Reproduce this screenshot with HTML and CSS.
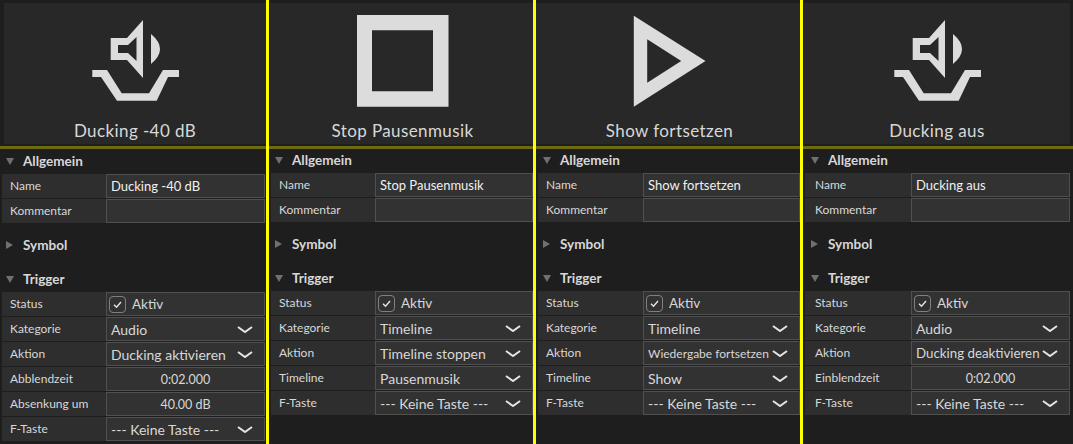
FILE: index.html
```html
<!DOCTYPE html>
<html lang="de">
<head>
    <meta charset="UTF-8">
    <meta name="viewport" content="width=device-width, initial-scale=1.0">
    <title>Cues</title>
    <link rel="stylesheet" href="styles.css">
</head>
<body>
    <div class="panels">
        <div class="panel panel-first">
            <div class="tile">
                <svg class="icon" viewBox="85 15 100 100"><path d="M110.7 38H127L143 20V78L127 60H110.7ZM118 45V53H128L136.5 61V37L128 45Z" fill-rule="evenodd"/><path d="M151 34Q169 49 151 64Z"/><path d="M92.3 70H107L121.7 93.3H149L163 70H179V77H168L156.7 100.7H117L101 77H92.3Z"/></svg>
                <div class="tile-name">Ducking -40 dB</div>
            </div>
            <div class="rule"></div>
            <h2 class="section"><span class="arrow-open"></span>Allgemein</h2>
            <div class="row"><div class="label">Name</div><div class="value name">Ducking -40 dB</div></div>
            <div class="row"><div class="label">Kommentar</div><div class="value"></div></div>
            <h2 class="section section-gap"><span class="arrow-closed"></span>Symbol</h2>
            <h2 class="section section-gap"><span class="arrow-open"></span>Trigger</h2>
            <div class="row"><div class="label">Status</div><div class="value toggle"><span class="check"><svg viewBox="0 0 15 15"><path d="M4 7.8L6.5 10.2L11 5"/></svg></span>Aktiv</div></div>
            <div class="row"><div class="label">Kategorie</div><div class="value select">Audio<svg class="chevron" viewBox="0 0 16 7"><path d="M1 1L8 6L15 1"/></svg></div></div>
            <div class="row"><div class="label">Aktion</div><div class="value select">Ducking aktivieren<svg class="chevron" viewBox="0 0 16 7"><path d="M1 1L8 6L15 1"/></svg></div></div>
            <div class="row"><div class="label">Abblendzeit</div><div class="value center">0:02.000</div></div>
            <div class="row"><div class="label">Absenkung um</div><div class="value center">40.00 dB</div></div>
            <div class="row"><div class="label">F-Taste</div><div class="value select">--- Keine Taste ---<svg class="chevron" viewBox="0 0 16 7"><path d="M1 1L8 6L15 1"/></svg></div></div>
        </div>

        <div class="panel panel-stop">
            <div class="tile">
                <svg class="icon" viewBox="0 0 100 100"><path d="M4 0H95.5V91.7H4ZM19 15.3V76.3H80V15.3Z" fill-rule="evenodd"/></svg>
                <div class="tile-name">Stop Pausenmusik</div>
            </div>
            <div class="rule"></div>
            <h2 class="section"><span class="arrow-open"></span>Allgemein</h2>
            <div class="row"><div class="label">Name</div><div class="value name">Stop Pausenmusik</div></div>
            <div class="row"><div class="label">Kommentar</div><div class="value"></div></div>
            <h2 class="section section-gap"><span class="arrow-closed"></span>Symbol</h2>
            <h2 class="section section-gap"><span class="arrow-open"></span>Trigger</h2>
            <div class="row"><div class="label">Status</div><div class="value toggle"><span class="check"><svg viewBox="0 0 15 15"><path d="M4 7.8L6.5 10.2L11 5"/></svg></span>Aktiv</div></div>
            <div class="row"><div class="label">Kategorie</div><div class="value select">Timeline<svg class="chevron" viewBox="0 0 16 7"><path d="M1 1L8 6L15 1"/></svg></div></div>
            <div class="row"><div class="label">Aktion</div><div class="value select">Timeline stoppen<svg class="chevron" viewBox="0 0 16 7"><path d="M1 1L8 6L15 1"/></svg></div></div>
            <div class="row"><div class="label">Timeline</div><div class="value select">Pausenmusik<svg class="chevron" viewBox="0 0 16 7"><path d="M1 1L8 6L15 1"/></svg></div></div>
            <div class="row"><div class="label">F-Taste</div><div class="value select">--- Keine Taste ---<svg class="chevron" viewBox="0 0 16 7"><path d="M1 1L8 6L15 1"/></svg></div></div>
        </div>

        <div class="panel panel-show">
            <div class="tile">
                <svg class="icon" viewBox="0 0 100 100"><path d="M13.8 0.7L85.5 46L13.8 91.7ZM27.2 24.3V67.7L61.2 46Z" fill-rule="evenodd"/></svg>
                <div class="tile-name">Show fortsetzen</div>
            </div>
            <div class="rule"></div>
            <h2 class="section"><span class="arrow-open"></span>Allgemein</h2>
            <div class="row"><div class="label">Name</div><div class="value name">Show fortsetzen</div></div>
            <div class="row"><div class="label">Kommentar</div><div class="value"></div></div>
            <h2 class="section section-gap"><span class="arrow-closed"></span>Symbol</h2>
            <h2 class="section section-gap"><span class="arrow-open"></span>Trigger</h2>
            <div class="row"><div class="label">Status</div><div class="value toggle"><span class="check"><svg viewBox="0 0 15 15"><path d="M4 7.8L6.5 10.2L11 5"/></svg></span>Aktiv</div></div>
            <div class="row"><div class="label">Kategorie</div><div class="value select">Timeline<svg class="chevron" viewBox="0 0 16 7"><path d="M1 1L8 6L15 1"/></svg></div></div>
            <div class="row"><div class="label">Aktion</div><div class="value select narrow">Wiedergabe fortsetzen<svg class="chevron" viewBox="0 0 16 7"><path d="M1 1L8 6L15 1"/></svg></div></div>
            <div class="row"><div class="label">Timeline</div><div class="value select">Show<svg class="chevron" viewBox="0 0 16 7"><path d="M1 1L8 6L15 1"/></svg></div></div>
            <div class="row"><div class="label">F-Taste</div><div class="value select">--- Keine Taste ---<svg class="chevron" viewBox="0 0 16 7"><path d="M1 1L8 6L15 1"/></svg></div></div>
        </div>

        <div class="panel panel-last">
            <div class="tile">
                <svg class="icon" viewBox="85 15 100 100"><path d="M110.7 38H127L143 20V78L127 60H110.7ZM118 45V53H128L136.5 61V37L128 45Z" fill-rule="evenodd"/><path d="M151 34Q169 49 151 64Z"/><path d="M92.3 70H107L121.7 93.3H149L163 70H179V77H168L156.7 100.7H117L101 77H92.3Z"/></svg>
                <div class="tile-name">Ducking aus</div>
            </div>
            <div class="rule"></div>
            <h2 class="section"><span class="arrow-open"></span>Allgemein</h2>
            <div class="row"><div class="label">Name</div><div class="value name">Ducking aus</div></div>
            <div class="row"><div class="label">Kommentar</div><div class="value"></div></div>
            <h2 class="section section-gap"><span class="arrow-closed"></span>Symbol</h2>
            <h2 class="section section-gap"><span class="arrow-open"></span>Trigger</h2>
            <div class="row"><div class="label">Status</div><div class="value toggle"><span class="check"><svg viewBox="0 0 15 15"><path d="M4 7.8L6.5 10.2L11 5"/></svg></span>Aktiv</div></div>
            <div class="row"><div class="label">Kategorie</div><div class="value select">Audio<svg class="chevron" viewBox="0 0 16 7"><path d="M1 1L8 6L15 1"/></svg></div></div>
            <div class="row"><div class="label">Aktion</div><div class="value select tight">Ducking deaktivieren<svg class="chevron" viewBox="0 0 16 7"><path d="M1 1L8 6L15 1"/></svg></div></div>
            <div class="row"><div class="label">Einblendzeit</div><div class="value center">0:02.000</div></div>
            <div class="row"><div class="label">F-Taste</div><div class="value select">--- Keine Taste ---<svg class="chevron" viewBox="0 0 16 7"><path d="M1 1L8 6L15 1"/></svg></div></div>
        </div>
    </div>
</body>
</html>
```
FILE: styles.css
```css
body {
    font-family: Lato, "Noto Sans", sans-serif;
    background-color: #1e1e1e;
    color: #d8d8d8;
    margin: 0;
    overflow: hidden;
}
.panels {
    display: flex;
    height: 444px;
}
.panel {
    width: 267px;
    box-sizing: border-box;
    padding-top: 3px;
    border-right: 3px solid #ffff00;
}
.panel-first {
    width: 269px;
}
.panel-last {
    border-right: none;
    flex: 1;
}
.tile {
    height: 141px;
    margin-left: 1px;
    background-color: #282828;
    display: flex;
    flex-direction: column;
    align-items: center;
}
.panel-first .tile {
    margin-left: 4px;
}
.panel-stop .tile {
    padding-left: 2px;
}
.panel-show .tile {
    margin-left: 0;
    padding-left: 3px;
}
.panel-last .tile {
    margin-right: 3px;
}
.icon {
    width: 100px;
    height: 100px;
    margin-top: 12px;
    fill: #dcdcdc;
}
.tile-name {
    font-size: 17px;
    line-height: 22px;
    margin-top: 5px;
    letter-spacing: 0.4px;
}
.rule {
    height: 3px;
    margin-top: 2px;
    margin-bottom: -1px;
    background-color: #6e6a12;
}
.panel-first .rule {
    margin-bottom: 0;
}
.section {
    display: flex;
    align-items: center;
    height: 24px;
    margin: 0 0 1px 6px;
    font-size: 13.5px;
    font-weight: 700;
}
.panel-show .section {
    margin-left: 7px;
}
.panel-last .section {
    margin-left: 8px;
}
.section-gap {
    margin-top: 10px;
}
.arrow-open {
    width: 0;
    height: 0;
    border-left: 4px solid transparent;
    border-right: 4px solid transparent;
    border-top: 7px solid #707070;
    margin-right: 9px;
}
.arrow-closed {
    width: 0;
    height: 0;
    border-top: 4px solid transparent;
    border-bottom: 4px solid transparent;
    border-left: 7px solid #707070;
    margin-right: 10px;
}
.row {
    display: flex;
    height: 24px;
    margin: 0 0 1px 2px;
    font-size: 12px;
}
.panel-first .row {
    margin-right: 1px;
}
.panel-last .row {
    margin-right: 3px;
}
.label {
    flex: 1;
    padding-left: 8px;
    box-sizing: border-box;
    background-color: #2e2e2e;
    line-height: 23px;
}
.panel-last .label {
    padding-left: 10px;
}
.value {
    width: 158px;
    display: flex;
    align-items: center;
    box-sizing: border-box;
    padding-left: 4px;
    background-color: #323232;
    border: 1px solid #505050;
    font-size: 14px;
    white-space: nowrap;
}
.panel-first .value, .panel-last .value {
    width: 159px;
}
.panel-show .value {
    width: 157px;
}
.name {
    font-size: 13px;
    color: #f0f0f0;
}
.toggle {
    padding-left: 2px;
    font-size: 13.5px;
}
.select {
    justify-content: space-between;
    padding-right: 11px;
}
.center {
    justify-content: center;
    padding-left: 0;
    font-size: 12.5px;
}
.narrow {
    font-size: 12px;
}
.tight {
    font-size: 13.3px;
}
.chevron {
    width: 16px;
    height: 7px;
    flex-shrink: 0;
    fill: none;
    stroke: #e6e6e6;
    stroke-width: 2;
}
.check {
    width: 17px;
    height: 17px;
    box-sizing: border-box;
    border: 1px solid #808080;
    border-radius: 4px;
    margin-right: 6px;
    display: flex;
}
.check svg {
    fill: none;
    stroke: #e6e6e6;
    stroke-width: 1.4;
}
```
